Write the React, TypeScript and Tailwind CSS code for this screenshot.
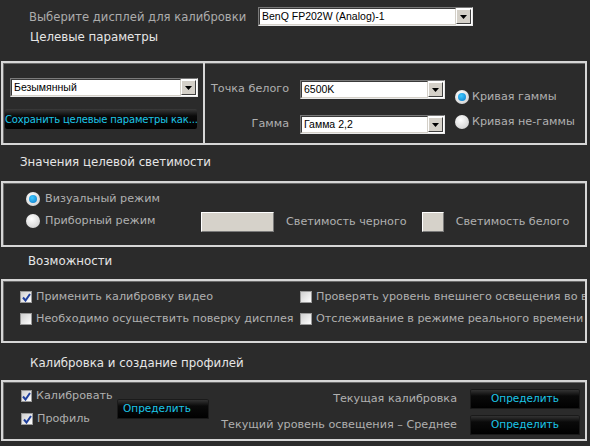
import React from "react";

const F = "font-['DejaVu_Sans',sans-serif]";

function Select({ w, text }: { w: string; text: string }) {
  return (
    <div
      className={`${w} flex h-[19px] items-stretch border border-t-[#7a7a7a] border-l-[#7a7a7a] border-b-[#e8e8e8] border-r-[#e8e8e8] bg-white`}
    >
      <div className="flex flex-1 items-center overflow-hidden whitespace-nowrap border border-t-[#3a3a3a] border-l-[#3a3a3a] border-b-[#d4d0c8] border-r-[#d4d0c8] pl-[2px] font-['Liberation_Sans',sans-serif] text-[10.5px] text-black">
        {text}
      </div>
      <div className="my-[1px] mr-[1px] flex w-[15px] items-center justify-center border border-t-[#ffffff] border-l-[#ffffff] border-b-[#404040] border-r-[#404040] bg-[#d4d0c8]">
        <svg width="7" height="4" viewBox="0 0 7 4">
          <polygon points="0,0 7,0 3.5,4" fill="#000" />
        </svg>
      </div>
    </div>
  );
}

function Radio({ checked }: { checked?: boolean }) {
  return (
    <div className="flex h-[14px] w-[14px] items-center justify-center rounded-full bg-[radial-gradient(circle_at_40%_35%,#ffffff,#d8d8d8_70%,#a8a8a8)]">
      {checked && <div className="h-[8px] w-[8px] rounded-full bg-[radial-gradient(circle_at_40%_35%,#3ec8ff,#0a78c8)]" />}
    </div>
  );
}

function Check({ checked }: { checked?: boolean }) {
  return (
    <div className="flex h-[12px] w-[12px] items-center justify-center border border-[#9a9a9a] bg-[linear-gradient(135deg,#cfcfcf,#ffffff)]">
      {checked && (
        <svg width="9" height="9" viewBox="0 0 9 9">
          <polyline points="1,4.5 3.5,7.5 8,1" fill="none" stroke="#1f3f9c" strokeWidth="2" />
        </svg>
      )}
    </div>
  );
}

function Btn({ w, text, left }: { w: string; text: string; left?: boolean }) {
  return (
    <div
      className={`${w} flex h-[20px] rounded-[2px] bg-[linear-gradient(#3a3a3a,#0a0a0a_35%,#000000)] shadow-[inset_0_0_0_1px_#1a1a1a] ${left ? "items-start justify-start pl-[6px] pt-[2px]" : "items-center justify-center"} ${F} text-[10.5px] text-[#1cc6e8] whitespace-nowrap`}
    >
      {text}
    </div>
  );
}

function Panel({ h, children }: { h: string; children: React.ReactNode }) {
  return (
    <div className={`${h} ml-[1px] w-[586px] overflow-hidden border-2 border-[#d6d6d6] shadow-[inset_1px_1px_0_#6a6a6a]`}>
      {children}
    </div>
  );
}

export default function App() {
  return (
    <div className={`h-[446px] w-[590px] overflow-hidden bg-[#2b2b2b] ${F} text-[#b0b0b0]`}>
      {/* top row */}
      <div className="mt-[7px] flex h-[19px] items-center">
        <div className="w-[258px] pl-[29px] text-[11.6px] leading-[14px] text-[#acacac]">Выберите дисплей для калибровки</div>
        <Select w="w-[215px]" text="BenQ FP202W (Analog)-1" />
      </div>
      <div className="h-[35px] pl-[30px] pt-[4px] text-[11.8px] leading-[14px] text-[#e6e6e6]">Целевые параметры</div>

      {/* Panel 1 */}
      <Panel h="h-[84px]">
        <div className="flex h-full">
          <div className="flex w-[200px] flex-col">
            <div className="ml-[7px] mt-[15px]">
              <Select w="w-[188px]" text="Безымянный" />
            </div>
            <div className="ml-[2px] mt-[12px]">
              <div className="flex h-[20px] w-[192px] items-center rounded-[2px] bg-[linear-gradient(#3a3a3a,#0a0a0a_35%,#000000)] text-[10px] tracking-[-0.15px] text-[#1cc6e8] whitespace-nowrap">
                Сохранить целевые параметры как...
              </div>
            </div>
          </div>
          <div className="w-[2px] bg-[#d6d6d6]" />
          <div className="flex">
            <div className="flex flex-col gap-[16px] pt-[17px]">
              <div className="flex h-[19px] items-center">
                <div className="w-[95px] whitespace-nowrap pr-[11px] text-right text-[11.2px]">Точка белого</div>
                <Select w="w-[145px]" text="6500K" />
              </div>
              <div className="flex h-[19px] items-center">
                <div className="w-[95px] whitespace-nowrap pr-[11px] text-right text-[11.2px]">Гамма</div>
                <Select w="w-[145px]" text="Гамма 2,2" />
              </div>
            </div>
            <div className="ml-[10px] flex flex-col gap-[11px] pt-[27px]">
              <div className="flex h-[14px] items-center gap-[3px] whitespace-nowrap text-[11.2px]">
                <Radio checked />
                <span>Кривая гаммы</span>
              </div>
              <div className="flex h-[14px] items-center gap-[3px] whitespace-nowrap text-[11.2px]">
                <Radio />
                <span>Кривая не-гаммы</span>
              </div>
            </div>
          </div>
        </div>
      </Panel>

      <div className="h-[36px] pl-[20px] pt-[10px] text-[11.8px] leading-[14px] text-[#e6e6e6]">Значения целевой светимости</div>

      {/* Panel 2 */}
      <Panel h="h-[66px]">
        <div className="flex h-full">
          <div className="flex w-[198px] flex-col gap-[8px] pl-[23px] pt-[9px]">
            <div className="flex h-[14px] items-center gap-[5px] text-[11.2px]">
              <Radio checked />
              <span>Визуальный режим</span>
            </div>
            <div className="flex h-[14px] items-center gap-[5px] text-[11.2px]">
              <Radio />
              <span>Приборный режим</span>
            </div>
          </div>
          <div className="flex items-start pt-[29px] text-[11.2px]">
            <div className="h-[20px] w-[73px] border border-t-[#ffffff] border-l-[#ffffff] border-b-[#7a7a7a] border-r-[#7a7a7a] bg-[#d6d2ca]" />
            <div className="ml-[12px] flex h-[20px] items-center">Светимость черного</div>
            <div className="ml-[15px] h-[20px] w-[22px] border border-t-[#ffffff] border-l-[#ffffff] border-b-[#7a7a7a] border-r-[#7a7a7a] bg-[#d6d2ca]" />
            <div className="ml-[12px] flex h-[20px] items-center">Светимость белого</div>
          </div>
        </div>
      </Panel>

      <div className="h-[32px] pl-[28px] pt-[7px] text-[11.8px] leading-[14px] text-[#e6e6e6]">Возможности</div>

      {/* Panel 3 */}
      <Panel h="h-[64px]">
        <div className="flex h-full whitespace-nowrap text-[11.2px]">
          <div className="flex w-[295px] shrink-0 flex-col gap-[8px] pl-[17px] pt-[9px]">
            <div className="flex h-[14px] items-center gap-[4px]">
              <Check checked />
              <span>Применить калибровку видео</span>
            </div>
            <div className="flex h-[14px] items-center gap-[4px]">
              <Check />
              <span>Необходимо осуществить поверку дисплея</span>
            </div>
          </div>
          <div className="flex flex-col gap-[8px] pl-[2px] pt-[9px]">
            <div className="flex h-[14px] items-center gap-[4px]">
              <Check />
              <span>Проверять уровень внешнего освещения во время калибровки</span>
            </div>
            <div className="flex h-[14px] items-center gap-[4px]">
              <Check />
              <span>Отслеживание в режиме реального времени</span>
            </div>
          </div>
        </div>
      </Panel>

      <div className="h-[37px] pl-[30px] pt-[13px] text-[11.8px] leading-[14px] text-[#e6e6e6]">Калибровка и создание профилей</div>

      {/* Panel 4 */}
      <Panel h="h-[61px]">
        <div className="flex h-full text-[11.2px]">
          <div className="flex w-[100px] flex-col gap-[9px] pl-[18px] pt-[7px]">
            <div className="flex h-[14px] items-center gap-[4px]">
              <Check checked />
              <span>Калибровать</span>
            </div>
            <div className="flex h-[14px] items-center gap-[4px]">
              <Check checked />
              <span>Профиль</span>
            </div>
          </div>
          <div className="ml-[14px] pt-[17px]">
            <Btn w="w-[92px]" text="Определить" left />
          </div>
          <div className="flex flex-1 flex-col gap-[6px] pt-[7px]">
            <div className="flex items-center justify-end">
              <span className="mr-[13px]">Текущая калибровка</span>
              <Btn w="w-[110px]" text="Определить" />
            </div>
            <div className="flex items-center justify-end">
              <span className="mr-[13px]">Текущий уровень освещения – Среднее</span>
              <Btn w="w-[110px]" text="Определить" />
            </div>
          </div>
          <div className="w-[5px]" />
        </div>
      </Panel>
    </div>
  );
}
